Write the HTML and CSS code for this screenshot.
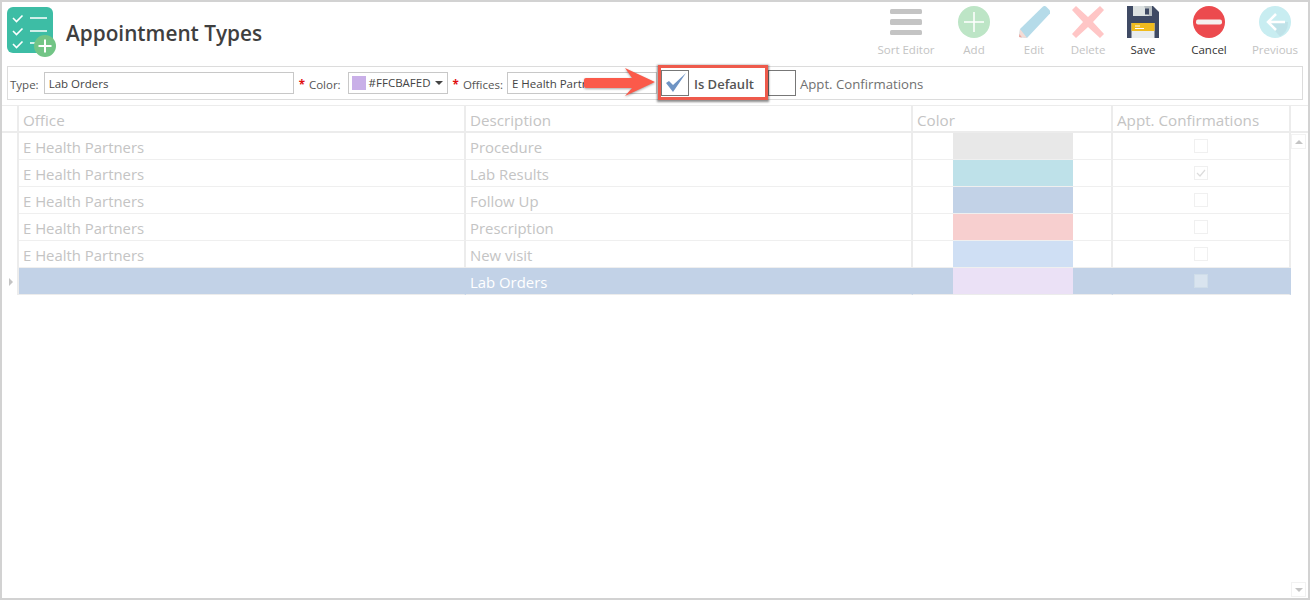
FILE: index.html
```html
<!DOCTYPE html>
<html lang="en">
<head>
<meta charset="utf-8">
<title>Appointment Types</title>
<link rel="stylesheet" href="styles.css">
</head>
<body>
<div class="app">
  <header class="topbar">
    <svg class="logo" width="50" height="50" viewBox="0 0 50 50">
      <rect x="0" y="0" width="46" height="46" rx="6" fill="#3dbda5"/>
      <g fill="none" stroke="#fff" stroke-width="1.6">
        <path d="M6 11l3.500 3.500 6-6M6 24l3.500 3.500 6-6M6 37l3.500 3.500 6-6"/>
        <path d="M23 11h17M23 24h17M23 36h6"/>
      </g>
      <circle cx="38" cy="39" r="11" fill="#72c586"/>
      <path d="M38 32.500v13M31.500 39h13" stroke="#fff" stroke-width="2" fill="none"/>
    </svg>
    <h1 class="title">Appointment Types</h1>
    <nav class="tools">
      <div class="tool w68 off">
        <svg width="32" height="32" viewBox="0 0 32 32"><g fill="#c4c4c4"><rect y="3" width="32" height="5" rx="1.500"/><rect y="13" width="32" height="6" rx="1.500"/><rect y="24" width="32" height="5" rx="1.500"/></g></svg>
        <span>Sort Editor</span>
      </div>
      <div class="tool w68 off">
        <svg width="32" height="32" viewBox="0 0 32 32"><circle cx="16" cy="16" r="16" fill="#bde5c6"/><path d="M16 6v20M6 16h20" stroke="#fff" stroke-width="1.500"/></svg>
        <span>Add</span>
      </div>
      <div class="tool w52 off">
        <svg width="32" height="32" viewBox="0 0 32 32"><path d="M9 32L1 31 2 23 25 0.500c1-.7 2-.7 3 0l4 4c.8 1 .7 2 0 3z" fill="#b5dbe9"/><path d="M1 31l1-8 7 9z" fill="#f4dcd6"/><path d="M1 31l.4-3 2.600 3.400z" fill="#e9a7a0"/></svg>
        <span>Edit</span>
      </div>
      <div class="tool w56 off">
        <svg width="32" height="32" viewBox="0 0 32 32"><path d="M4 0L16 11 28 0 32 4 21 16 32 28 28 32 16 21 4 32 0 28 11 16 0 4z" fill="#ffc6c6"/></svg>
        <span>Delete</span>
      </div>
      <div class="tool w54">
        <svg width="32" height="32" viewBox="0 0 32 32"><path d="M0 0h26l6 6v26H0z" fill="#3f4a64"/><path d="M6 0h19v10H6z" fill="#dde2e2"/><path d="M17 0h8v10h-3z" fill="#b9bfc2"/><rect x="18" y="2.500" width="4" height="6" fill="#3f4a64"/><rect x="4.500" y="17" width="23" height="15" fill="#e9eced"/><rect x="4.500" y="17" width="23" height="8" fill="#f0bb1d"/><path d="M8 20h5M8 22.500h9" stroke="#fff" stroke-width="1"/></svg>
        <span>Save</span>
      </div>
      <div class="tool w78">
        <svg width="32" height="32" viewBox="0 0 32 32"><circle cx="16" cy="16" r="16" fill="#ec4a4e"/><rect x="3" y="13.500" width="26" height="5" rx="2" fill="#f5f0ee"/></svg>
        <span>Cancel</span>
      </div>
      <div class="tool w54 off">
        <svg width="32" height="32" viewBox="0 0 32 32"><circle cx="16" cy="16" r="16" fill="#c8edf1"/><path d="M16 16h13a16 16 0 0 1-8 14.500L10 18z" fill="#bfe2e8"/><path d="M17 8l-8 8 8 8M9 16h17" fill="none" stroke="#fff" stroke-width="2.500"/></svg>
        <span>Previous</span>
      </div>
    </nav>
  </header>

  <section class="filters">
    <label class="lbl first">Type:</label>
    <div class="field type-field">Lab Orders</div>
    <label class="lbl"><b class="req">*</b> Color:</label>
    <div class="field color-field"><i class="swatch"></i>#FFCBAFED<i class="caret"></i></div>
    <label class="lbl"><b class="req">*</b> Offices:</label>
    <div class="field office-field">E Health Partners</div>
    <div class="check default-check"><svg width="26" height="24" viewBox="0 0 26 24"><path d="M4 12l3-2 4 4L24 2 11 21z" fill="#6f94c4"/></svg></div>
    <span class="default-label">Is Default</span>
    <div class="check conf-check"></div>
    <span class="conf-label">Appt. Confirmations</span>
  </section>

  <section class="grid">
    <div class="row head">
      <div class="gutter"></div>
      <div class="cell office">Office</div>
      <div class="cell desc">Description</div>
      <div class="cell color">Color</div>
      <div class="cell conf">Appt. Confirmations</div>
      <div class="corner"></div>
    </div>
    <div class="row">
      <div class="gutter"></div>
      <div class="cell office">E Health Partners</div>
      <div class="cell desc">Procedure</div>
      <div class="cell color"><i class="chip" style="background:#e8e8e8"></i></div>
      <div class="cell conf"><i class="box"></i></div>
    </div>
    <div class="row">
      <div class="gutter"></div>
      <div class="cell office">E Health Partners</div>
      <div class="cell desc">Lab Results</div>
      <div class="cell color"><i class="chip" style="background:#bee1e9"></i></div>
      <div class="cell conf"><i class="box"><svg width="12" height="12" viewBox="0 0 12 12"><path d="M2 6l3 3 5-6" fill="none" stroke="#dcdcdc" stroke-width="1.200"/></svg></i></div>
    </div>
    <div class="row">
      <div class="gutter"></div>
      <div class="cell office">E Health Partners</div>
      <div class="cell desc">Follow Up</div>
      <div class="cell color"><i class="chip" style="background:#c2d2e7"></i></div>
      <div class="cell conf"><i class="box"></i></div>
    </div>
    <div class="row">
      <div class="gutter"></div>
      <div class="cell office">E Health Partners</div>
      <div class="cell desc">Prescription</div>
      <div class="cell color"><i class="chip" style="background:#f7cfcf"></i></div>
      <div class="cell conf"><i class="box"></i></div>
    </div>
    <div class="row">
      <div class="gutter"></div>
      <div class="cell office">E Health Partners</div>
      <div class="cell desc">New visit</div>
      <div class="cell color"><i class="chip" style="background:#cfdff4"></i></div>
      <div class="cell conf"><i class="box"></i></div>
    </div>
    <div class="row selected">
      <div class="gutter"><i class="pointer"></i></div>
      <div class="cell office"></div>
      <div class="cell desc">Lab Orders</div>
      <div class="cell color"><i class="chip" style="background:#ebe1f6"></i></div>
      <div class="cell conf"><i class="box"></i></div>
    </div>
    <div class="scroll-btn up"><i></i></div>
    <div class="scroll-btn down"><i></i></div>
  </section>

  <div class="callout"></div>
  <svg class="arrow" width="74" height="36" viewBox="0 0 74 36"><path d="M4 12h46L43 2l30 14-30 14 7-8H4q-2 0-2-2v-6q0-2 2-2z" fill="#fb5a4a"/></svg>
</div>
</body>
</html>
```
FILE: styles.css
```css
* { box-sizing: border-box; }
html, body { margin: 0; padding: 0; }
body { width: 1310px; height: 600px; overflow: hidden; background: #fff; font-family: "Open Sans", "Noto Sans", sans-serif; }
.app { position: relative; width: 1310px; height: 600px; border: 2px solid #d2d2d2; background: #fff; }

.topbar { display: flex; align-items: flex-start; height: 64px; padding-left: 5px; }
.logo { margin-top: 5px; flex: none; }
.title { margin: 17px 0 0 9px; font-size: 20.800px; line-height: 28px; font-weight: 600; color: #3f3f3f; white-space: nowrap; }
.tools { display: flex; margin-left: auto; margin-right: 6px; padding-top: 4px; }
.tool { display: flex; flex-direction: column; align-items: center; font-size: 11.500px; line-height: 16px; color: #333; }
.tool svg { display: block; margin-bottom: 4px; }
.tool.off { color: #c3c3c3; }
.w52 { width: 52px; } .w54 { width: 54px; } .w56 { width: 56px; } .w68 { width: 68px; } .w78 { width: 78px; }

.filters { display: flex; align-items: center; height: 34px; margin: 0 5px; border: 1px solid #dcdcdc; font-size: 11.500px; color: #555; white-space: nowrap; }
.lbl { margin-left: 5px; padding-top: 2px; }
.lbl.first { margin-left: 2px; }
.req { color: #e01010; font-weight: 700; margin-right: 1px; }
.field { height: 22px; line-height: 22px; border: 1px solid #c8c8c8; padding-left: 4px; color: #444; background: #fff; }
.type-field { width: 250px; margin-left: 5px; }
.color-field { display: flex; align-items: center; width: 100px; margin-left: 7px; padding-left: 3px; }
.swatch { width: 14px; height: 14px; background: #c9afe8; margin-right: 3px; }
.caret { margin-left: 4px; border: 4px solid transparent; border-top: 4px solid #444; border-bottom: 0; }
.office-field { width: 150px; margin-left: 4px; }
.check { width: 28px; height: 26px; border: 1px solid #777; background: #fff; flex: none; }
.default-check { margin-left: 4px; }
.check svg { display: block; }
.default-label { margin-left: 5px; padding-top: 2px; font-size: 13px; font-weight: 600; color: #555; width: 74px; }
.conf-check { margin-left: 0; }
.conf-label { margin-left: 4px; padding-top: 2px; font-size: 13.200px; color: #707070; }

.grid { position: relative; margin-top: 5px; border-top: 1px solid #ececec; }
.row { display: flex; height: 27px; }
.gutter { position: relative; flex: none; width: 17px; border-right: 2px solid #ececec; }
.cell { flex: none; height: 27px; padding-left: 4px; font-size: 14.900px; line-height: 29px; color: #c4c4c4; border-right: 2px solid #ececec; border-bottom: 1px solid #efefef; white-space: nowrap; }
.head .cell { border-bottom: 2px solid #ececec; font-size: 15.200px; }
.head .gutter { border-bottom: 2px solid #ececec; }
.office { width: 447px; }
.desc { width: 447px; }
.color { position: relative; width: 200px; padding: 0; }
.head .color { padding-left: 4px; }
.conf { display: flex; align-items: center; justify-content: center; width: 178px; padding: 0; }
.head .conf { display: block; padding-left: 4px; }
.corner { flex: none; width: 17px; border-bottom: 2px solid #ececec; }
.chip { position: absolute; left: 40px; top: 0; width: 120px; height: 26px; }
.box { display: flex; align-items: center; justify-content: center; width: 14px; height: 14px; border: 1px solid #f0f0f0; background: #fff; }
.selected .cell { background: #c2d2e7; color: #fff; border-right-color: #c2d2e7; border-bottom: 1px solid #ececec; }
.selected .box { background: #d9e4ef; border-color: #cfdde9; }
.pointer { position: absolute; left: 7px; top: 10px; border: 4px solid transparent; border-left: 4px solid #c4c4c4; border-right: 0; }
.scroll-btn { position: absolute; left: 1289px; width: 15px; height: 15px; border: 1px solid #f2f2f2; display: flex; align-items: center; justify-content: center; }
.scroll-btn.up { top: 28px; }
.scroll-btn i { border: 4px solid transparent; }
.scroll-btn.up i { border-bottom: 4px solid #c4c4c4; border-top: 0; }
.scroll-btn.down { top: 476px; }
.scroll-btn.down i { border-top: 4px solid #c4c4c4; border-bottom: 0; }

.callout { position: absolute; left: 656px; top: 63px; width: 110px; height: 35px; border: 3px solid #ee5a4c; box-shadow: 0 1px 2px 1px rgba(0,0,0,.45); }
.arrow { position: absolute; left: 580px; top: 64px; filter: drop-shadow(0 1px 1px rgba(0,0,0,.35)); }
```
